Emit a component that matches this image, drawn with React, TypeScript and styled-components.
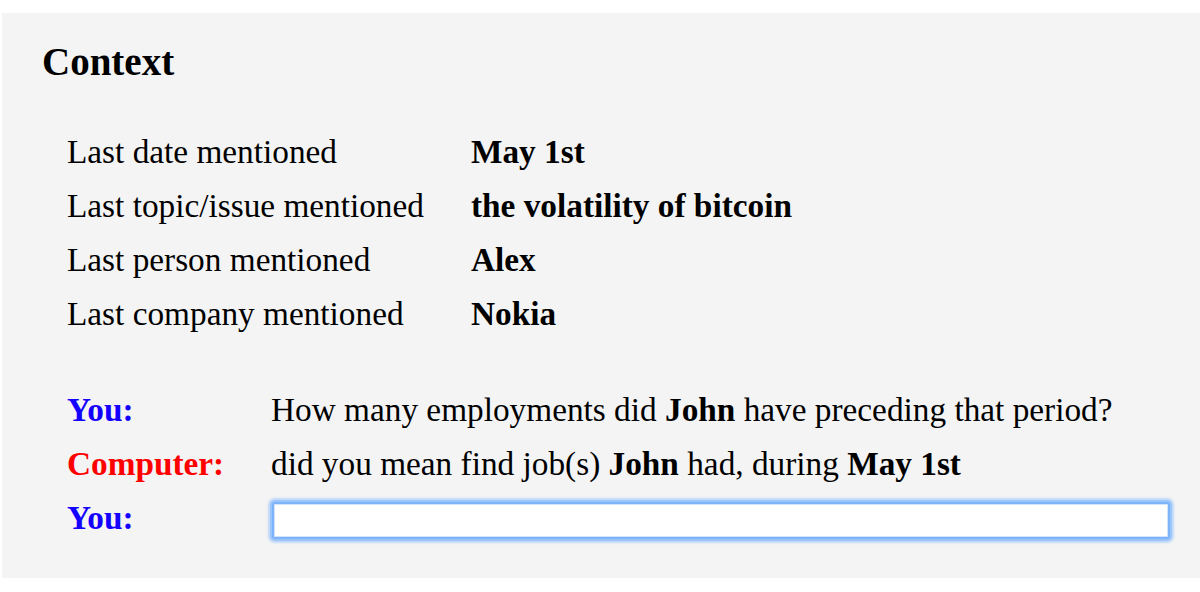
import React from "react";
import styled, { createGlobalStyle } from "styled-components";

const Global = createGlobalStyle`
  html, body { margin: 0; padding: 0; background: #ffffff; }
  body { font-family: "Liberation Serif", "Times New Roman", serif; color: #000; }
`;

const Panel = styled.section`
  margin: 13px 0 0 2px;
  height: 565px;
  box-sizing: border-box;
  background: #f4f4f4;
  padding: 26px 0 0 40px;
`;

const Title = styled.h3`
  margin: 0;
  font-size: 39px;
  line-height: 46px;
  font-weight: bold;
`;

const ContextTable = styled.div`
  margin: 40px 0 0 25px;
  display: grid;
  grid-template-columns: 404px auto;
  font-size: 33.3px;
  line-height: 54px;
`;

const Label = styled.div`
  font-weight: normal;
`;

const Value = styled.div`
  font-weight: bold;
`;

const Chat = styled.div`
  margin: 42px 0 0 25px;
  display: grid;
  grid-template-columns: 204px 1fr;
  align-items: center;
  font-size: 33.3px;
  line-height: 54px;
`;

const Speaker = styled.div<{ $who: "you" | "computer" }>`
  font-weight: bold;
  color: ${(p) => (p.$who === "you" ? "#1400ff" : "#ff0000")};
`;

const Message = styled.div`
  white-space: nowrap;
`;

const InputCell = styled.div`
  display: flex;
  align-items: center;
  height: 54px;
`;

const TextInput = styled.input`
  box-sizing: border-box;
  width: 898px;
  height: 37px;
  margin: 5px 0 0 1px;
  background: #fff;
  border: 2px solid #7db3f8;
  border-radius: 3px;
  box-shadow: 0 0 0 2px #9cc6fa, 0 0 2px 4px rgba(170, 205, 250, 0.7), inset 0 0 0 1px #d3e5fc;
  outline: none;
  font-family: inherit;
  font-size: 20px;
`;

const rows: [string, string][] = [
  ["Last date mentioned", "May 1st"],
  ["Last topic/issue mentioned", "the volatility of bitcoin"],
  ["Last person mentioned", "Alex"],
  ["Last company mentioned", "Nokia"],
];

export default function App() {
  return (
    <>
      <Global />
      <Panel>
        <Title>Context</Title>
        <ContextTable>
          {rows.map(([l, v]) => (
            <React.Fragment key={l}>
              <Label>{l}</Label>
              <Value>{v}</Value>
            </React.Fragment>
          ))}
        </ContextTable>
        <Chat>
          <Speaker $who="you">You:</Speaker>
          <Message>
            How many employments did <b>John</b> have preceding that period?
          </Message>
          <Speaker $who="computer">Computer:</Speaker>
          <Message>
            did you mean find job(s) <b>John</b> had, during <b>May 1st</b>
          </Message>
          <Speaker $who="you">You:</Speaker>
          <InputCell>
            <TextInput type="text" />
          </InputCell>
        </Chat>
      </Panel>
    </>
  );
}
